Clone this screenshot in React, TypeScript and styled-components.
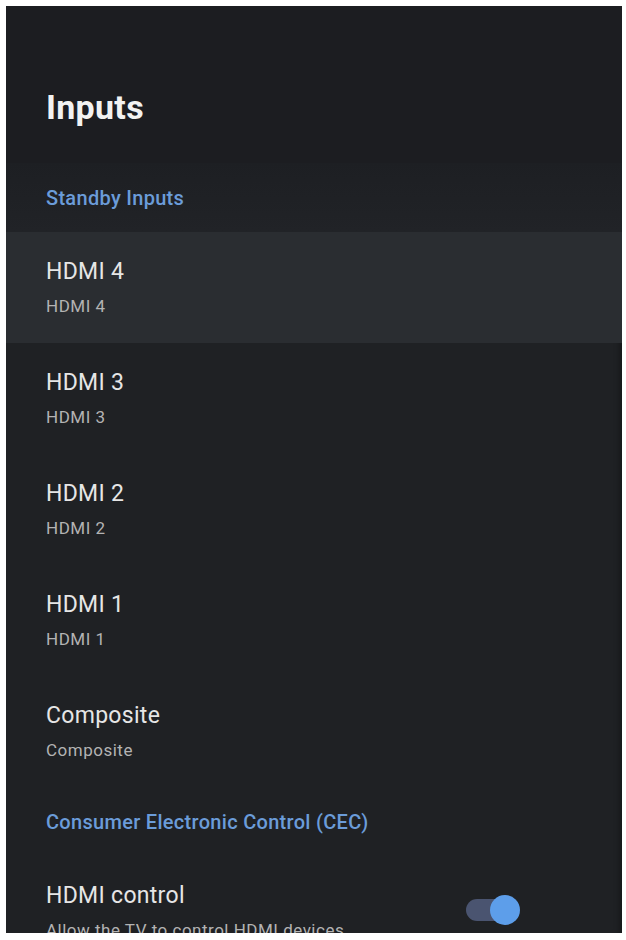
import React from 'react';
import styled, { createGlobalStyle } from 'styled-components';

const GlobalStyle = createGlobalStyle`
    html, body {
        margin: 0;
        padding: 0;
        background: #ffffff;
    }
    body {
        font-family: Roboto, "Noto Sans", "Liberation Sans", sans-serif;
        -webkit-font-smoothing: antialiased;
    }
`;

const Page = styled.div`
    padding: 6px 4px 7px 6px;
    width: 626px;
    height: 940px;
    box-sizing: border-box;
`;

const Panel = styled.div`
    width: 616px;
    height: 927px;
    overflow: hidden;
    display: flex;
    flex-direction: column;
    background: #1f2124;
    box-shadow: inset -6px 0 6px -4px rgba(0, 0, 0, 0.35);
`;

const Header = styled.div`
    height: 157px;
    flex-shrink: 0;
    box-sizing: border-box;
    padding: 81px 40px 0;
    background: #1c1d21;
`;

const Title = styled.h1`
    margin: 0;
    font-size: 34px;
    line-height: 40px;
    font-weight: 700;
    color: #f2f2f2;
    letter-spacing: 0.3px;
`;

const SectionLabel = styled.div<{ $tint?: boolean }>`
    height: 69px;
    flex-shrink: 0;
    display: flex;
    align-items: center;
    padding: 0 40px;
    font-size: 20px;
    font-weight: 500;
    letter-spacing: 0.3px;
    color: #6b9cd9;
    background: ${p => p.$tint ? 'linear-gradient(#1d1f23, #212327)' : 'transparent'};
`;

const Row = styled.div<{ $focused?: boolean }>`
    height: 111px;
    flex-shrink: 0;
    display: flex;
    flex-direction: row;
    align-items: center;
    justify-content: space-between;
    padding: 0 112px 0 40px;
    box-sizing: border-box;
    background: ${p => p.$focused ? '#2a2d31' : 'transparent'};
`;

const RowText = styled.div`
    display: flex;
    flex-direction: column;
    gap: 11px;
`;

const RowTitle = styled.div`
    font-size: 23px;
    letter-spacing: 0.3px;
    color: #e6e6e6;
    line-height: 26px;
`;

const RowSubtitle = styled.div`
    font-size: 17px;
    letter-spacing: 0.5px;
    color: #b3b3b3;
    line-height: 21px;
    white-space: nowrap;
`;

const Switch = styled.div<{ $on?: boolean }>`
    position: relative;
    width: 44px;
    height: 22px;
    margin-top: -3px;
    border-radius: 11px;
    background: ${p => p.$on ? '#4a5470' : '#555'};
    flex-shrink: 0;
`;

const Knob = styled.div`
    position: absolute;
    right: -10px;
    top: -4px;
    width: 30px;
    height: 30px;
    border-radius: 50%;
    background: #5d9eea;
`;

interface InputItem {
    title: string;
    subtitle: string;
}

const inputs: InputItem[] = [
    { title: 'HDMI 4', subtitle: 'HDMI 4' },
    { title: 'HDMI 3', subtitle: 'HDMI 3' },
    { title: 'HDMI 2', subtitle: 'HDMI 2' },
    { title: 'HDMI 1', subtitle: 'HDMI 1' },
    { title: 'Composite', subtitle: 'Composite' },
];

export default function App() {
    return (
        <>
            <GlobalStyle />
            <Page>
                <Panel>
                    <Header>
                        <Title>Inputs</Title>
                    </Header>
                    <SectionLabel $tint>Standby Inputs</SectionLabel>
                    {inputs.map((item, index) => (
                        <Row key={item.title} $focused={index === 0}>
                            <RowText>
                                <RowTitle>{item.title}</RowTitle>
                                <RowSubtitle>{item.subtitle}</RowSubtitle>
                            </RowText>
                        </Row>
                    ))}
                    <SectionLabel>Consumer Electronic Control (CEC)</SectionLabel>
                    <Row>
                        <RowText>
                            <RowTitle>HDMI control</RowTitle>
                            <RowSubtitle>Allow the TV to control HDMI devices</RowSubtitle>
                        </RowText>
                        <Switch $on>
                            <Knob />
                        </Switch>
                    </Row>
                </Panel>
            </Page>
        </>
    );
}
